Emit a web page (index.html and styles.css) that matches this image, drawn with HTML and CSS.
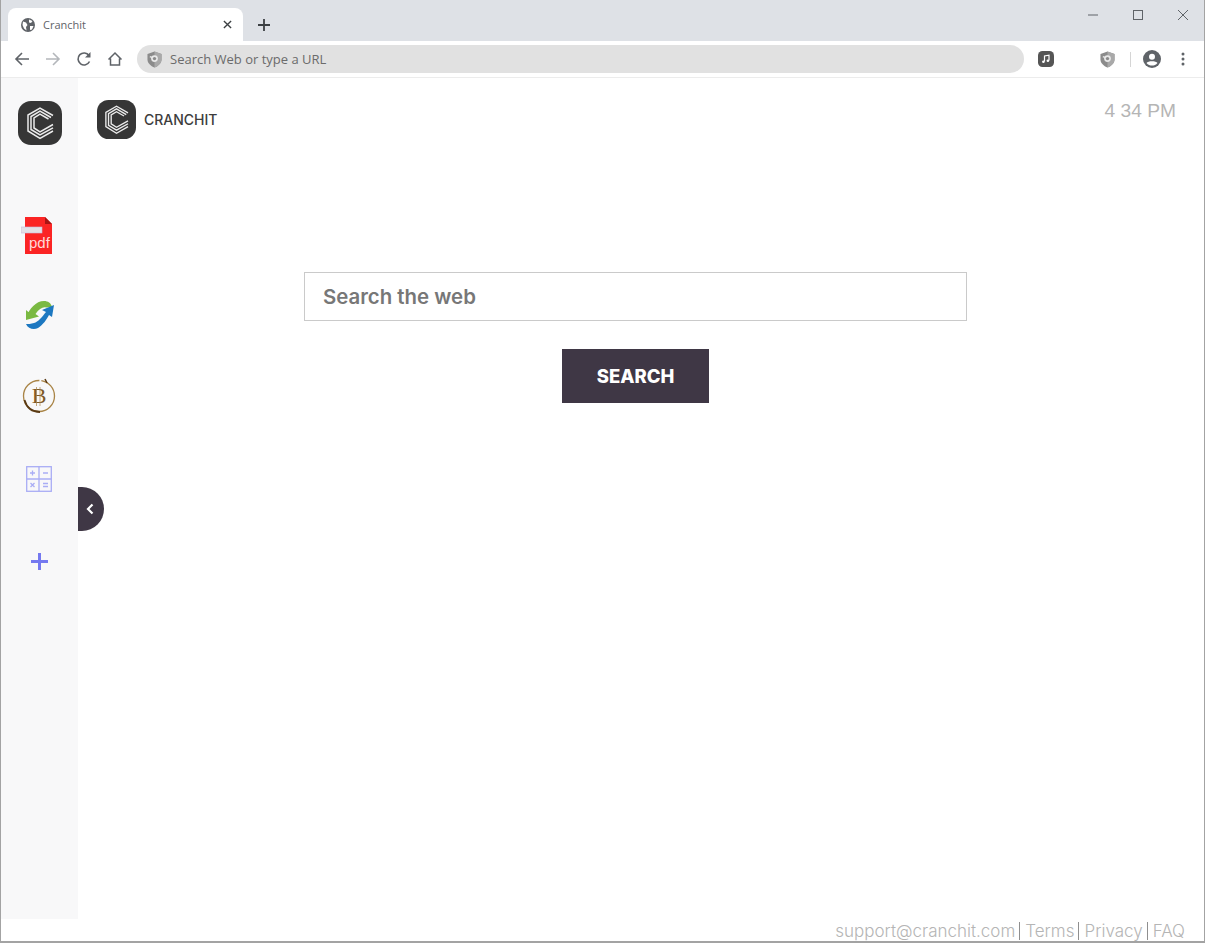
FILE: index.html
```html
<!DOCTYPE html>
<html lang="en">
<head>
  <meta charset="UTF-8">
  <title>Cranchit</title>
  <link rel="stylesheet" href="styles.css">
</head>
<body>
  <svg class="defs" width="0" height="0">
    <symbol id="logo" viewBox="0 0 44 44">
      <rect width="44" height="44" rx="13" fill="#363636"/>
      <g fill="none" stroke="#ececec" stroke-width="1.500">
        <path d="M35 14.500L22 7L10 14V30L22 37.500L35 30"/>
        <path d="M33 16.500L22 10L13 15.500V28.500L22 34L35 26.800"/>
        <path d="M30.500 18L22 13.200L16 16.800V27L22 30.800L35 23.500"/>
      </g>
    </symbol>
    <symbol id="shield" viewBox="0 0 16 18">
      <path d="M8 0.500L15.500 3V9C15.500 13 12 16 8 17.500C4 16 0.500 13 0.500 9V3Z" fill="#8b8b8b"/>
      <path d="M8 0.500L15.500 3V9C15.500 13 12 16 8 17.500Z" fill="#a9a9a9"/>
      <circle cx="8" cy="8" r="3.600" fill="#e8e8e8"/>
      <circle cx="8" cy="8" r="1.800" fill="#8b8b8b"/>
      <path d="M3 6L6 7" stroke="#e8e8e8" stroke-width="1.500"/>
    </symbol>
  </svg>

  <div class="window">
    <div class="tabstrip">
      <div class="tab">
        <svg class="favicon" viewBox="0 0 14 14">
          <circle cx="7" cy="7" r="7" fill="#5f6368"/>
          <path d="M2 3.500L5 4.500L6.500 7L5 9L5.500 12.500L3 10.500L1.500 7ZM8 1.500L11.500 3L10 5L8 4.500ZM9 8H12.500L11 11.500L9 12Z" fill="#fff"/>
        </svg>
        <span class="tab-title">Cranchit</span>
        <svg class="tab-close" viewBox="0 0 10 10"><path d="M1 1L9 9M9 1L1 9" stroke="#3c4043" stroke-width="1.500"/></svg>
      </div>
      <svg class="new-tab" viewBox="0 0 12 12"><path d="M6 0V12M0 6H12" stroke="#3c4043" stroke-width="1.800"/></svg>
      <div class="window-controls">
        <svg viewBox="0 0 12 12"><path d="M1 6H11" stroke="#5f6368" stroke-width="1"/></svg>
        <svg viewBox="0 0 12 12"><rect x="1.500" y="1.500" width="9" height="9" fill="none" stroke="#5f6368" stroke-width="1"/></svg>
        <svg viewBox="0 0 12 12"><path d="M1 1L11 11M11 1L1 11" stroke="#5f6368" stroke-width="1"/></svg>
      </div>
    </div>

    <div class="toolbar">
      <div class="nav-buttons">
        <svg viewBox="0 0 16 16"><path d="M15 8H2M8 2L2 8L8 14" fill="none" stroke="#5f6368" stroke-width="1.600"/></svg>
        <svg viewBox="0 0 16 16"><path d="M1 8H14M8 2L14 8L8 14" fill="none" stroke="#b4b7bb" stroke-width="1.600"/></svg>
        <svg viewBox="0 0 16 16"><path d="M13.500 10.500A6 6 0 1 1 13 4.500" fill="none" stroke="#5f6368" stroke-width="1.600"/><path d="M14.500 1V6.500H9Z" fill="#5f6368"/></svg>
        <svg viewBox="0 0 16 16"><path d="M1.500 8.500L8 2L14.500 8.500M3.500 7.500V14H12.500V7.500" fill="none" stroke="#5f6368" stroke-width="1.500"/></svg>
      </div>
      <div class="address-bar">
        <svg class="address-shield"><use href="#shield"/></svg>
        <span>Search Web or type a URL</span>
      </div>
      <div class="extensions">
        <svg class="ext-music" viewBox="0 0 16 16">
          <rect width="16" height="16" rx="4.500" fill="#555"/>
          <path d="M6.500 10.500V5L11 4.200V9.500" fill="none" stroke="#fff" stroke-width="1.200"/>
          <circle cx="5.400" cy="10.800" r="1.300" fill="#fff"/><circle cx="9.900" cy="9.800" r="1.300" fill="#fff"/>
        </svg>
        <svg class="ext-shield"><use href="#shield"/></svg>
        <span class="ext-divider"></span>
        <svg class="ext-profile" viewBox="0 0 18 18">
          <circle cx="9" cy="9" r="9" fill="#5f6368"/>
          <circle cx="9" cy="6.800" r="3" fill="#fff"/>
          <path d="M3.500 13C5 10.800 13 10.800 14.500 13C13 15 11 15.500 9 15.500C7 15.500 5 15 3.500 13Z" fill="#fff"/>
        </svg>
        <svg class="ext-menu" viewBox="0 0 4 14"><circle cx="2" cy="2" r="1.500" fill="#5f6368"/><circle cx="2" cy="7" r="1.500" fill="#5f6368"/><circle cx="2" cy="12" r="1.500" fill="#5f6368"/></svg>
      </div>
    </div>

    <div class="main">
      <aside class="sidebar">
        <svg class="side-logo"><use href="#logo"/></svg>
        <svg class="side-pdf" viewBox="0 0 32 37">
          <path d="M4 0H24L31 7V37H4Z" fill="#fb2424"/>
          <path d="M24 0L31 7H24Z" fill="#a81414"/>
          <rect x="0" y="10" width="21" height="6" fill="#e3e0e6" stroke="#c9b9d6" stroke-width="0.600"/>
          <text x="8" y="31" class="pdf-label">pdf</text>
        </svg>
        <svg class="side-swap" viewBox="0 0 30 30">
          <path d="M2 16C4 9 11 1 19 1C23 1 26 3 27 7L21 7.500C18 6.500 14 9 10.500 14L14 16.500L1 20L1 10L4 12.500Z" fill="#7ab942"/>
          <path d="M1 24C3 29 9 30 13 28C18 25 22 19 24 15L27 17L29 5L17 10L21 12C17 17 13 22 9 23C6 24 3 24 1 24Z" fill="#1d78c1"/>
        </svg>
        <svg class="side-coin" viewBox="0 0 34 36">
          <circle cx="17" cy="18" r="15.500" fill="none" stroke="#a98446" stroke-width="1.300" stroke-dasharray="30 3 40 2"/>
          <path d="M2.500 22C5 31 11 34 18 34" fill="none" stroke="#5a3a14" stroke-width="1.800"/>
          <path d="M23 1L25 5" stroke="#5a3a14" stroke-width="1.500"/>
          <text x="17" y="25" class="coin-label">B</text>
          <path d="M14.500 9V28M18 9V28" stroke="#a98446" stroke-width="0.700"/>
        </svg>
        <svg class="side-calc" viewBox="0 0 26 26">
          <g fill="none" stroke="#a9adf5" stroke-width="1.300">
            <rect x="0.700" y="0.700" width="24.600" height="24.600"/>
            <path d="M13 0.700V25.300M0.700 13H25.300"/>
            <path d="M4 7H9M6.500 4.500V9.500M17 7H22M4.500 17L8.500 21M8.500 17L4.500 21M17 17.500H22M17 20.500H22"/>
          </g>
        </svg>
        <svg class="side-add" viewBox="0 0 17 17"><path d="M8.500 0V17M0 8.500H17" stroke="#7579f0" stroke-width="3"/></svg>
      </aside>

      <button class="side-toggle" aria-label="Collapse">
        <svg viewBox="0 0 8 12"><path d="M6.500 1.500L2 6L6.500 10.500" fill="none" stroke="#fff" stroke-width="2.200"/></svg>
      </button>

      <div class="content">
        <header class="top-row">
          <div class="brand">
            <svg class="brand-logo"><use href="#logo"/></svg>
            <span class="brand-name">CRANCHIT</span>
          </div>
          <div class="clock">4 34 PM</div>
        </header>
        <form class="search-form">
          <input class="search-input" type="text" placeholder="Search the web">
          <button class="search-button" type="button">SEARCH</button>
        </form>
      </div>
    </div>

    <footer class="footer">
      <a>support@cranchit.com</a><a>Terms</a><a>Privacy</a><a>FAQ</a>
    </footer>
  </div>
</body>
</html>
```

FILE: styles.css
```css
:root {
  --strip: #dee1e6;
  --dark: #3f3745;
  --sidebar: #f8f8f9;
  --footer-text: #b5b5b5;
}

* {
  box-sizing: border-box;
}

body {
  margin: 0;
  font-family: "Open Sans", sans-serif;
  background: #fff;
}

.defs {
  position: absolute;
}

.window {
  display: flex;
  flex-direction: column;
  height: 943px;
  border: 1px solid #a3a3a3;
  border-top: none;
  border-bottom-width: 2px;
  overflow: hidden;
}

.tabstrip {
  display: flex;
  align-items: flex-end;
  height: 41px;
  padding-left: 7px;
  background: var(--strip);
}

.tab {
  display: flex;
  align-items: center;
  width: 235px;
  height: 33px;
  padding: 0 11px 0 13px;
  background: #fff;
  border-radius: 8px 8px 0 0;
}

.favicon {
  width: 14px;
  height: 14px;
}

.tab-title {
  flex: 1;
  margin-left: 8px;
  font-size: 11px;
  color: #5f6368;
}

.tab-close {
  width: 9px;
  height: 9px;
}

.new-tab {
  width: 12px;
  height: 12px;
  margin: 0 0 10px 15px;
}

.window-controls {
  display: flex;
  gap: 33px;
  align-self: flex-start;
  margin: 9px 15px 0 auto;
}

.window-controls svg {
  width: 12px;
  height: 12px;
}

.toolbar {
  display: flex;
  align-items: center;
  height: 37px;
  border-bottom: 1px solid #ececec;
  background: #fff;
}

.nav-buttons {
  display: flex;
  align-items: center;
  gap: 15px;
  width: 136px;
  padding-left: 13px;
}

.nav-buttons svg {
  width: 16px;
  height: 16px;
}

.address-bar {
  display: flex;
  align-items: center;
  width: 887px;
  height: 28px;
  padding-left: 10px;
  background: #e1e1e1;
  border-radius: 14px;
  font-size: 13px;
  color: #6b6b6b;
}

.address-shield {
  width: 15px;
  height: 17px;
  margin-right: 8px;
}

.extensions {
  display: flex;
  align-items: center;
  padding-left: 14px;
}

.ext-music {
  width: 16px;
  height: 16px;
}

.ext-shield {
  width: 15px;
  height: 17px;
  margin-left: 46px;
}

.ext-divider {
  width: 1px;
  height: 15px;
  margin: 0 12px 0 15px;
  background: #d5d5d5;
}

.ext-profile {
  width: 18px;
  height: 18px;
}

.ext-menu {
  width: 4px;
  height: 14px;
  margin-left: 20px;
}

.main {
  position: relative;
  display: flex;
  flex: 1;
}

.sidebar {
  display: flex;
  flex-direction: column;
  align-items: flex-start;
  flex: none;
  width: 77px;
  background: var(--sidebar);
}

.side-logo {
  width: 44px;
  height: 44px;
  margin: 23px 0 0 17px;
}

.side-pdf {
  width: 32px;
  height: 37px;
  margin: 72px 0 0 20px;
}

.side-swap {
  width: 30px;
  height: 30px;
  margin: 46px 0 0 24px;
}

.side-coin {
  width: 34px;
  height: 36px;
  margin: 48px 0 0 21px;
}

.side-calc {
  width: 26px;
  height: 26px;
  margin: 52px 0 0 25px;
}

.side-add {
  width: 17px;
  height: 17px;
  margin: 61px 0 0 30px;
}

.pdf-label {
  font-family: "Liberation Sans", sans-serif;
  font-size: 15px;
  fill: #ffd9d9;
}

.coin-label {
  font-family: "Liberation Serif", serif;
  font-size: 22px;
  text-anchor: middle;
  fill: #7d5a28;
}

.side-toggle {
  position: absolute;
  left: 77px;
  top: 409px;
  display: flex;
  align-items: center;
  justify-content: center;
  width: 26px;
  height: 44px;
  padding: 0 2px 0 0;
  border: none;
  border-radius: 0 22px 22px 0;
  background: var(--dark);
}

.side-toggle svg {
  width: 8px;
  height: 12px;
}

.content {
  flex: 1;
  padding: 22px 28px 0 19px;
}

.top-row {
  display: flex;
  justify-content: space-between;
}

.brand {
  display: flex;
  align-items: center;
  gap: 8px;
}

.brand-logo {
  width: 39px;
  height: 39px;
}

.brand-name {
  font-family: Inter, sans-serif;
  font-size: 14px;
  font-weight: 500;
  color: #3d3d3d;
}

.clock {
  font-family: "Liberation Sans", sans-serif;
  font-size: 19.200px;
  line-height: 22px;
  color: #b5b5b5;
}

.search-form {
  display: flex;
  flex-direction: column;
  align-items: center;
  width: 663px;
  margin: 133px 0 0 207px;
}

.search-input {
  width: 100%;
  height: 49px;
  padding: 0 17px 1px 18px;
  border: 1.500px solid #cacaca;
  border-radius: 0;
  font-family: Inter, sans-serif;
  font-size: 20.400px;
  font-weight: 600;
  outline: none;
}

.search-input::placeholder {
  color: #777;
  opacity: 1;
}

.search-button {
  width: 147px;
  height: 54px;
  margin-top: 28px;
  border: none;
  background: var(--dark);
  font-family: Inter, sans-serif;
  font-size: 18.500px;
  font-weight: 800;
  color: #fff;
}

.footer {
  display: flex;
  justify-content: flex-end;
  align-items: center;
  flex: none;
  height: 22px;
  padding: 1px 19px 0 0;
  font-family: Inter, sans-serif;
  font-size: 17px;
  font-weight: 300;
  color: var(--footer-text);
}

.footer a + a {
  margin-left: 4px;
  padding-left: 5px;
  border-left: 1px solid #8f8f8f;
  line-height: 18px;
}
```
